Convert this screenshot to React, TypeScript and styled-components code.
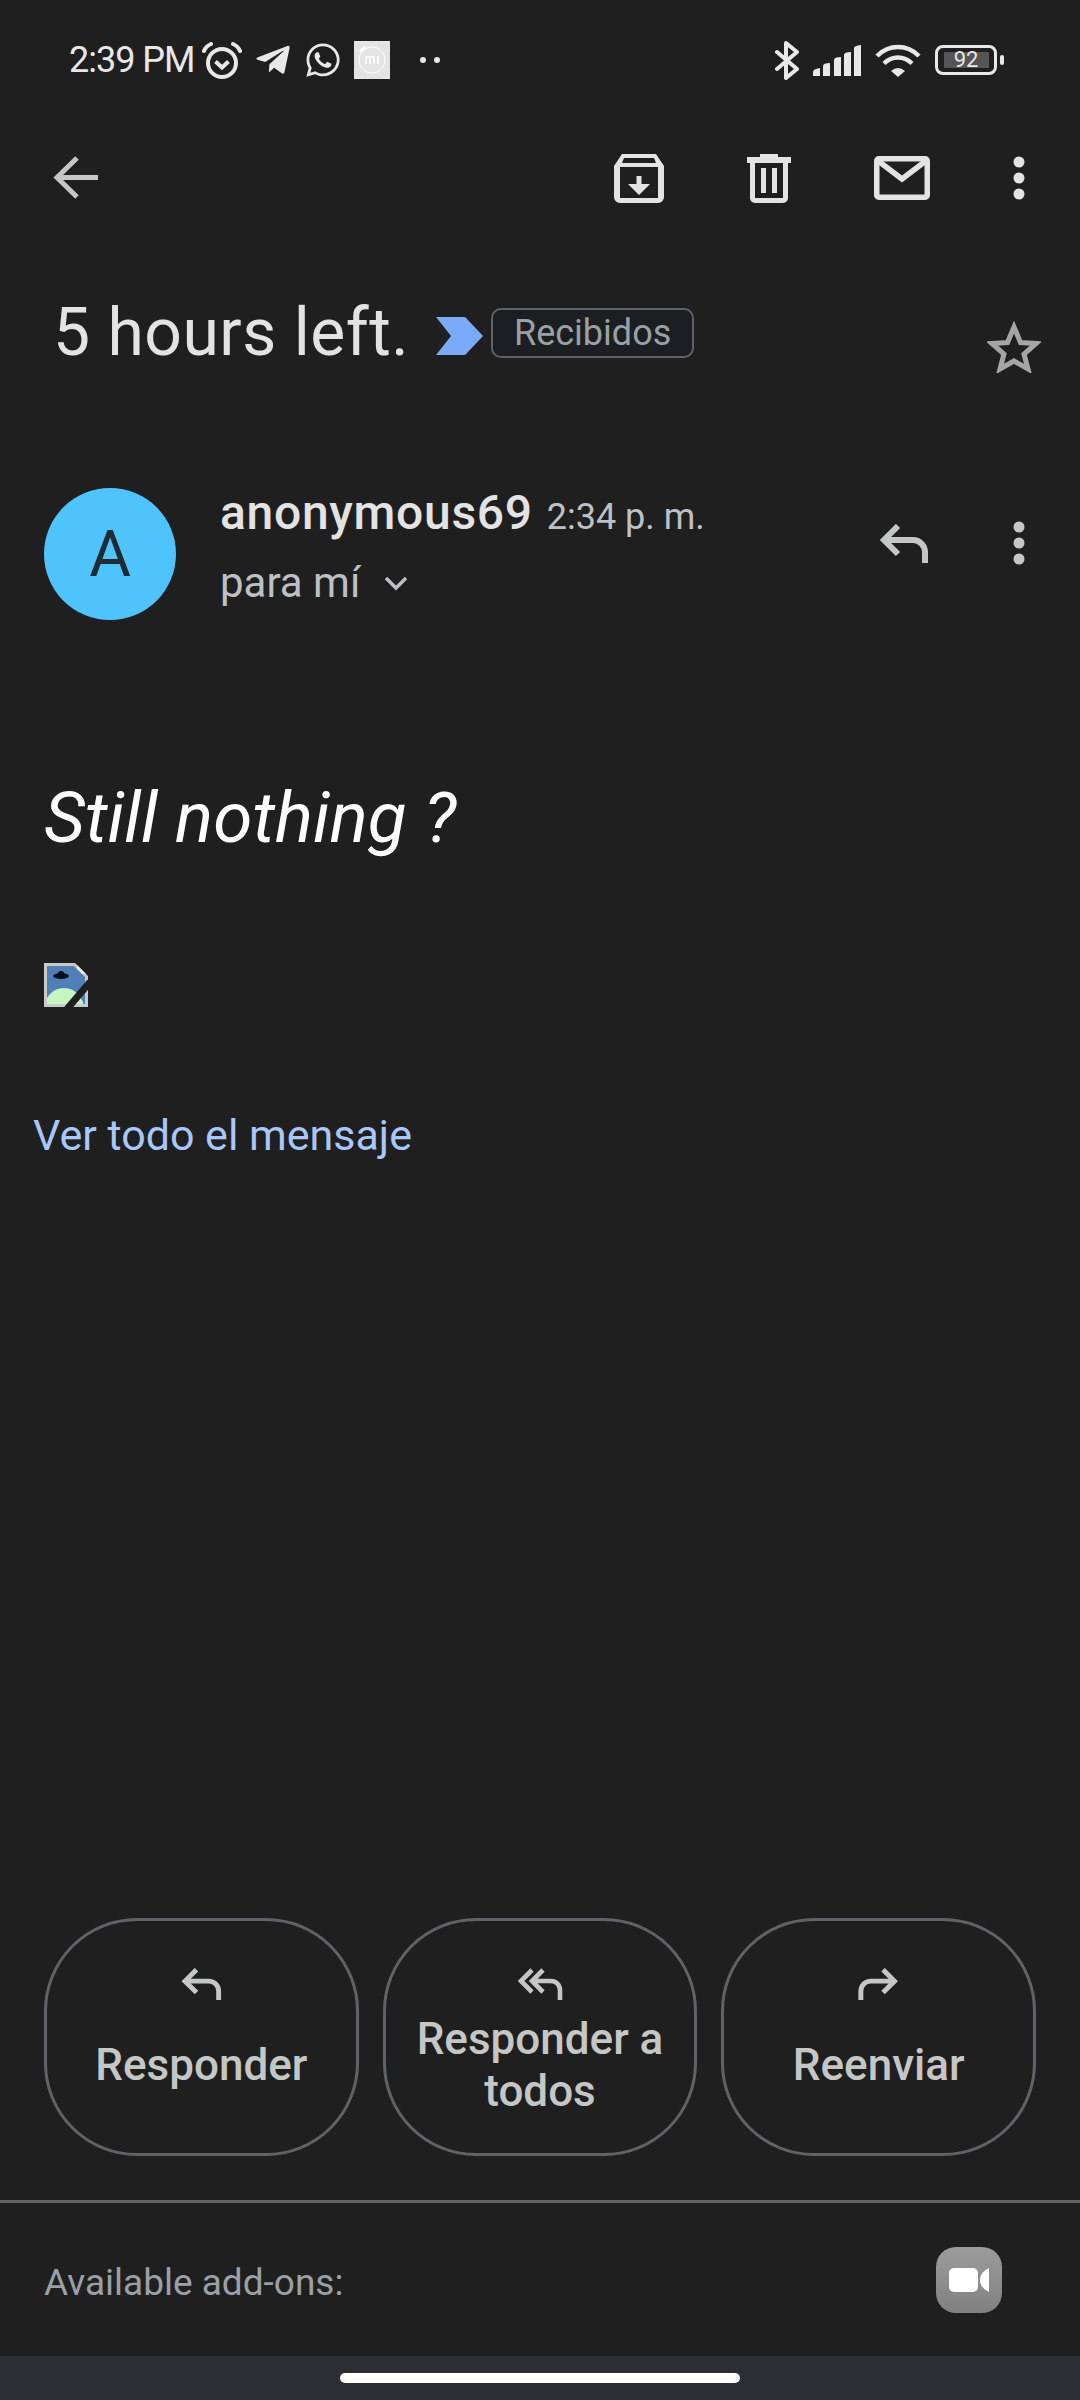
import React from 'react';
import styled, { createGlobalStyle } from 'styled-components';
import { FaTelegramPlane, FaWhatsapp } from 'react-icons/fa';

const GlobalStyle = createGlobalStyle`
  html, body {
    margin: 0;
    padding: 0;
    background: #1f1f1f;
  }

  * {
    box-sizing: border-box;
  }
`;

const Page = styled.div`
  display: flex;
  flex-direction: column;
  width: 1080px;
  height: 2400px;
  overflow: hidden;
  background: #1f1f1f;
  font-family: Roboto, 'Liberation Sans', sans-serif;
`;

const StatusBar = styled.div`
  display: flex;
  align-items: center;
  justify-content: space-between;
  height: 120px;
  padding: 0 77px 0 69px;
  color: #e8e8e8;
`;

const StatusGroup = styled.div<{ $gap: number }>`
  display: flex;
  align-items: center;
  gap: ${(props) => props.$gap}px;
`;

const Clock = styled.span`
  margin-right: -5px;
  font-size: 36px;
  letter-spacing: -1px;
  line-height: 40px;
`;

const MiBadge = styled.div`
  display: flex;
  align-items: center;
  justify-content: center;
  width: 36px;
  height: 38px;
  background: #e4e4e4;
`;

const StatusDots = styled.div`
  display: flex;
  gap: 8px;
  margin-left: 18px;
`;

const StatusDot = styled.i`
  width: 6px;
  height: 6px;
  border-radius: 50%;
  background: #e8e8e8;
`;

const Battery = styled.div`
  position: relative;
  display: flex;
  align-items: center;
  justify-content: center;
  width: 62px;
  height: 30px;
  margin-right: 6px;
  border: 3px solid #e8e8e8;
  border-radius: 8px;

  &::after {
    content: '';
    position: absolute;
    top: 7px;
    right: -10px;
    width: 4px;
    height: 10px;
    border-radius: 2px;
    background: #e8e8e8;
  }
`;

const BatteryLevel = styled.span`
  width: 45px;
  height: 16px;
  border-radius: 1px;
  background: #555555;
  color: #e8e8e8;
  font-size: 22px;
  line-height: 16px;
  text-align: center;
`;

const Toolbar = styled.div`
  display: flex;
  align-items: center;
  justify-content: space-between;
  height: 114px;
  padding: 2px 55px 0 53px;
  color: #e3e3e3;
`;

const ToolbarActions = styled.div`
  display: flex;
  align-items: center;
  gap: 83px;
`;

const BackButton = styled.span`
  display: flex;
  margin-top: -2px;
  color: #c4c7c5;
`;

const SubjectRow = styled.div`
  display: flex;
  align-items: flex-start;
  height: 232px;
  padding: 64px 39px 0 53px;
`;

const Subject = styled.h1`
  margin: 0 27px 0 0;
  color: #e3e3e3;
  font-size: 66px;
  font-weight: 400;
  line-height: 70px;
  letter-spacing: 0.5px;
  white-space: nowrap;
`;

const Label = styled.span`
  display: flex;
  align-items: center;
  justify-content: center;
  width: 203px;
  height: 50px;
  margin: 10px 0 0 8px;
  border: 2px solid #5f6368;
  border-radius: 10px;
  background: #1c1e22;
  color: #9aa0a6;
  font-size: 36px;
`;

const LabelArrow = styled.svg`
  margin-top: 19px;
`;

const StarSlot = styled.span`
  display: flex;
  margin: 23px 0 0 auto;
  color: #a5a5a5;
`;

const SenderRow = styled.div`
  display: flex;
  align-items: flex-start;
  height: 310px;
  padding: 22px 55px 0 44px;
`;

const Avatar = styled.div`
  display: flex;
  align-items: center;
  justify-content: center;
  flex: none;
  width: 132px;
  height: 132px;
  border-radius: 50%;
  background: #4fc3fb;
  color: #1f2a33;
  font-size: 64px;
`;

const SenderInfo = styled.div`
  display: flex;
  flex-direction: column;
  margin: -3px 0 0 44px;
`;

const SenderLine = styled.div`
  display: flex;
  align-items: baseline;
  gap: 14px;
  height: 56px;
`;

const SenderName = styled.span`
  color: #e3e3e3;
  font-size: 48px;
  font-weight: 500;
  line-height: 56px;
  letter-spacing: 0.7px;
`;

const SentAt = styled.span`
  color: #bdc1c6;
  font-size: 36px;
`;

const Recipient = styled.div`
  display: flex;
  align-items: center;
  gap: 24px;
  margin-top: 17px;
  color: #bdc1c6;
  font-size: 42px;
  line-height: 50px;
`;

const SenderActions = styled.div`
  display: flex;
  align-items: center;
  gap: 85px;
  margin: 33px 0 0 auto;
  color: #c4c7c5;
`;

const Message = styled.div`
  display: flex;
  flex: 1;
  flex-direction: column;
  align-items: flex-start;
  padding: 0 0 0 44px;
`;

const Lead = styled.p`
  margin: 0;
  color: #ffffff;
  font-size: 71px;
  font-style: italic;
  line-height: 84px;
`;

const BrokenImage = styled.svg`
  margin-top: 103px;
`;

const FullMessageLink = styled.a`
  margin: 103px 0 0 -11px;
  color: #a8c7fa;
  font-size: 43px;
  line-height: 50px;
`;

const ReplyActions = styled.div`
  display: flex;
  gap: 24px;
  padding: 0 44px;
`;

const ReplyButton = styled.div`
  display: flex;
  flex-direction: column;
  align-items: center;
  width: 315px;
  height: 238px;
  padding-top: 47px;
  border: 3px solid #5f6368;
  border-radius: 93px;
  color: #c4c7c5;
`;

const ReplyLabel = styled.span<{ $wrapped?: boolean }>`
  margin-top: ${(props) => (props.$wrapped ? '13px' : '39px')};
  font-size: 44px;
  font-weight: 500;
  line-height: 52px;
  text-align: center;
`;

const Divider = styled.div`
  height: 3px;
  margin-top: 44px;
  background: #5f6368;
`;

const AddOns = styled.div`
  display: flex;
  align-items: center;
  justify-content: space-between;
  height: 153px;
  padding: 0 78px 0 44px;
  color: #9aa0a6;
  font-size: 37px;
`;

const AddOnsLabel = styled.span`
  padding-top: 6px;
`;

const MeetButton = styled.div`
  display: flex;
  align-items: center;
  justify-content: center;
  width: 66px;
  height: 66px;
  border-radius: 20px;
  background: linear-gradient(#9c9c9c, #808080);
`;

const NavBar = styled.div`
  display: flex;
  align-items: flex-start;
  justify-content: center;
  height: 44px;
  padding-top: 17px;
  background: #2d2e33;
`;

const HomePill = styled.div`
  width: 400px;
  height: 10px;
  border-radius: 5px;
  background: #ffffff;
`;

const AlarmIcon = () => (
  <svg width="40" height="37" viewBox="0 0 40 37" fill="none" stroke="currentColor">
    <circle cx="20" cy="21" r="14" strokeWidth="4" />
    <path d="M13.5 19.5 20 25.5 26.5 19.5" strokeWidth="4" />
    <path d="M2 9Q4 4 9 2M38 9Q36 4 31 2" strokeWidth="4" strokeLinecap="round" />
  </svg>
);

const MiIcon = () => (
  <svg width="36" height="38" viewBox="0 0 36 38" fill="none" stroke="#ffffff">
    <circle cx="18" cy="19" r="13" strokeWidth="1" />
    <path d="M6 11 11 6" strokeWidth="3" />
    <path d="M12 23V16H20V23M16 17V23M24 15V23" strokeWidth="1.5" />
  </svg>
);

const BluetoothIcon = () => (
  <svg width="24" height="39" viewBox="0 0 24 39" fill="none" stroke="currentColor" strokeWidth="4" strokeLinejoin="round" strokeLinecap="round">
    <path d="M2 11 22 28 11 37V2L22 11 2 28" />
  </svg>
);

const SignalIcon = () => (
  <svg width="48" height="31" viewBox="0 0 48 31" fill="currentColor">
    <path d="M0 31V27Q0 24 7 23V31Z" />
    <path d="M10 31V21Q10 18 17 18V31Z" />
    <path d="M21 31V15Q21 12 28 12V31Z" />
    <path d="M31 31V10Q31 7 38 7V31Z" />
    <path d="M41 31V3Q41 1 48 0V31Z" />
  </svg>
);

const WifiIcon = () => (
  <svg width="46" height="33" viewBox="0 0 46 33" fill="none" stroke="currentColor" strokeWidth="4.5">
    <path d="M2 12C14 0 32 0 44 12" />
    <path d="M9 19.5C17 11.5 29 11.5 37 19.5" />
    <path d="M16 27Q23 21 30 27L23 33Z" fill="currentColor" stroke="none" />
  </svg>
);

const BackIcon = () => (
  <svg width="45" height="43" viewBox="0 0 45 43" fill="none" stroke="currentColor" strokeWidth="5">
    <path d="M24 2 4 21.5 24 41M4 21.5H45" />
  </svg>
);

const ArchiveIcon = () => (
  <svg width="50" height="49" viewBox="0 0 50 49" fill="currentColor">
    <path
      fillRule="evenodd"
      d="M8 0H42L50 12V43A6 6 0 0 1 44 49H6A6 6 0 0 1 0 43V12ZM6 13V44H44V13ZM10 4 8 9H42L40 4Z"
    />
    <path d="M22.5 22H27.5V30H36L25 41 14 30H22.5Z" />
  </svg>
);

const TrashIcon = () => (
  <svg width="44" height="49" viewBox="0 0 44 49" fill="currentColor">
    <path
      fillRule="evenodd"
      d="M13 0H31V3H44V9H41V44A5 5 0 0 1 36 49H8A5 5 0 0 1 3 44V9H0V3H13ZM8 9V44H36V9Z"
    />
    <path d="M14 14H19V39H14ZM25 14H30V39H25Z" />
  </svg>
);

const MailIcon = () => (
  <svg width="56" height="44" viewBox="0 0 56 44" fill="none" stroke="currentColor" strokeWidth="5.5">
    <rect x="2.75" y="2.75" width="50.5" height="38.5" rx="2" />
    <path d="M3 4 28 23 53 4" />
  </svg>
);

const MoreIcon = () => (
  <svg width="12" height="44" viewBox="0 0 12 44" fill="currentColor">
    <circle cx="6" cy="6" r="5.5" />
    <circle cx="6" cy="22" r="5.5" />
    <circle cx="6" cy="38" r="5.5" />
  </svg>
);

const StarIcon = () => (
  <svg width="54" height="52" viewBox="0 0 54 52" fill="none" stroke="currentColor" strokeWidth="5">
    <path d="M27 6 33.5 21.5 49 22.5 37 33 41 48 27 40 13 48 17 33 5 22.5 20.5 21.5Z" />
  </svg>
);

const ReplyIcon = ({ width, height }: { width: number; height: number }) => (
  <svg width={width} height={height} viewBox="0 0 49 39" fill="none" stroke="currentColor" strokeWidth="6">
    <path d="M19 2 5 16 19 30M5 16H34A12 12 0 0 1 46 28V39" />
  </svg>
);

const ReplyAllIcon = () => (
  <svg width="45" height="32" viewBox="0 0 45 32" fill="none" stroke="currentColor" strokeWidth="4.6">
    <path d="M14 2 3 13 14 24" />
    <path d="M25 2 14 13 25 24M14 13H33A9 9 0 0 1 42 22V32" />
  </svg>
);

const ForwardIcon = () => (
  <svg width="41" height="32" viewBox="0 0 49 39" fill="none" stroke="currentColor" strokeWidth="6">
    <path d="M30 2 44 16 30 30M44 16H15A12 12 0 0 0 3 28V39" />
  </svg>
);

const MeetIcon = () => (
  <svg width="40" height="24" viewBox="0 0 40 24" fill="#ffffff">
    <rect width="29" height="24" rx="5" />
    <path d="M40 0V24Q31 20 31 12T40 0Z" />
  </svg>
);

const BrokenImageIcon = () => (
  <BrokenImage width="44" height="44" viewBox="0 0 44 44">
    <defs>
      <clipPath id="broken-sheet">
        <path d="M3 3H30L41 14V41H3Z" />
      </clipPath>
    </defs>
    <path d="M0 0H31L44 13V44H0Z" fill="#c9c9c9" />
    <path d="M33 2 42 11H33Z" fill="#ececec" />
    <g clipPath="url(#broken-sheet)">
      <rect x="3" y="3" width="38" height="38" fill="#4f80b8" />
      <ellipse cx="17" cy="13" rx="8" ry="3" fill="#05101c" />
      <rect x="14" y="8" width="6" height="5" rx="2.5" fill="#05101c" />
      <ellipse cx="20" cy="46" rx="20" ry="21" fill="#c6f5c2" />
    </g>
    <path d="M46 19 23 46" stroke="#1f1f1f" strokeWidth="7" />
  </BrokenImage>
);

export default function App() {
  return (
    <Page>
      <GlobalStyle />
      <StatusBar>
        <StatusGroup $gap={12}>
          <Clock>2:39 PM</Clock>
          <AlarmIcon />
          <FaTelegramPlane size={38} />
          <FaWhatsapp size={38} />
          <MiBadge>
            <MiIcon />
          </MiBadge>
          <StatusDots>
            <StatusDot />
            <StatusDot />
          </StatusDots>
        </StatusGroup>
        <StatusGroup $gap={14}>
          <BluetoothIcon />
          <SignalIcon />
          <WifiIcon />
          <Battery>
            <BatteryLevel>92</BatteryLevel>
          </Battery>
        </StatusGroup>
      </StatusBar>

      <Toolbar>
        <BackButton>
          <BackIcon />
        </BackButton>
        <ToolbarActions>
          <ArchiveIcon />
          <TrashIcon />
          <MailIcon />
          <MoreIcon />
        </ToolbarActions>
      </Toolbar>

      <SubjectRow>
        <Subject>5 hours left.</Subject>
        <LabelArrow width="47" height="38" viewBox="0 0 47 38" fill="#7baaf7">
          <path d="M0 0H28Q30 0 31 2L47 19 31 36Q30 38 28 38H0L15 19Z" />
        </LabelArrow>
        <Label>Recibidos</Label>
        <StarSlot>
          <StarIcon />
        </StarSlot>
      </SubjectRow>

      <SenderRow>
        <Avatar>A</Avatar>
        <SenderInfo>
          <SenderLine>
            <SenderName>anonymous69</SenderName>
            <SentAt>2:34 p. m.</SentAt>
          </SenderLine>
          <Recipient>
            para mí
            <svg width="24" height="15" viewBox="0 0 24 15" fill="none" stroke="#bdc1c6" strokeWidth="3.5">
              <path d="M2 2 12 12 22 2" />
            </svg>
          </Recipient>
        </SenderInfo>
        <SenderActions>
          <ReplyIcon width={49} height={39} />
          <MoreIcon />
        </SenderActions>
      </SenderRow>

      <Message>
        <Lead>Still nothing ?</Lead>
        <BrokenImageIcon />
        <FullMessageLink>Ver todo el mensaje</FullMessageLink>
      </Message>

      <ReplyActions>
        <ReplyButton>
          <ReplyIcon width={42} height={32} />
          <ReplyLabel>Responder</ReplyLabel>
        </ReplyButton>
        <ReplyButton>
          <ReplyAllIcon />
          <ReplyLabel $wrapped>Responder a todos</ReplyLabel>
        </ReplyButton>
        <ReplyButton>
          <ForwardIcon />
          <ReplyLabel>Reenviar</ReplyLabel>
        </ReplyButton>
      </ReplyActions>

      <Divider />

      <AddOns>
        <AddOnsLabel>Available add-ons:</AddOnsLabel>
        <MeetButton>
          <MeetIcon />
        </MeetButton>
      </AddOns>

      <NavBar>
        <HomePill />
      </NavBar>
    </Page>
  );
}
